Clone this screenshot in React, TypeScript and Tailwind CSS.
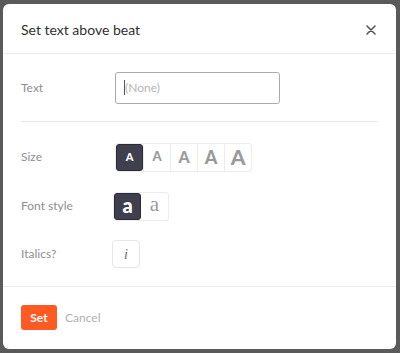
export default function App() {
  const sizes = ["text-[11px]", "text-[13px]", "text-[16px]", "text-[18px]", "text-[21px]"];
  return (
    <div className="w-[400px] h-[353px] bg-[#5a5a5a] pt-[4px] pl-[3px] font-['Lato','Liberation_Sans',sans-serif]">
      <div className="w-[393px] h-[345px] bg-white rounded-[6px] flex flex-col">
        <div className="h-[50px] flex items-center justify-between pl-[18px] pr-[20px] border-b border-[#ececf0]">
          <span className="text-[14px] text-[#2f2f33] mt-[2px]">Set text above beat</span>
          <svg width="10" height="10" viewBox="0 0 10 10" className="mt-[2px]">
            <path d="M1 1L9 9M9 1L1 9" stroke="#555" strokeWidth="1.6" strokeLinecap="round" />
          </svg>
        </div>
        <div className="px-[18px]">
          <div className="flex items-center h-[68px] border-b border-[#e8e8ee]">
            <span className="w-[94px] text-[12px] text-[#8e8e92]">Text</span>
            <div className="w-[165px] h-[32px] border border-[#a9a9ad] rounded-[3px] flex items-center pl-[8px]">
              <span className="w-px h-[15px] bg-[#555]" />
              <span className="text-[12px] text-[#b4b4b8]">(None)</span>
            </div>
          </div>
          <div className="flex items-center mt-[21px] h-[28px]">
            <span className="w-[94px] text-[12px] text-[#8e8e92]">Size</span>
            <div className="flex border border-[#ececef] rounded-[3px]">
              {sizes.map((s, i) => (
                <div
                  key={i}
                  className={
                    "w-[27px] h-[27px] flex items-center justify-center font-black " +
                    s +
                    (i === 0
                      ? " bg-[#3f3f4e] text-white rounded-[3px] border border-[#2b2b36]"
                      : " text-[#9a9a9e] border-l border-[#ececef]")
                  }
                >
                  A
                </div>
              ))}
            </div>
          </div>
          <div className="flex items-center mt-[21px] h-[28px]">
            <span className="w-[92px] text-[12px] text-[#8e8e92]">Font style</span>
            <div className="flex border border-[#ececef] rounded-[3px]">
              <div className="w-[27px] h-[27px] flex items-center justify-center bg-[#3f3f4e] text-white rounded-[3px] border border-[#2b2b36] text-[20px] font-black leading-none pb-[3px]">
                a
              </div>
              <div className="w-[27px] h-[27px] flex items-center justify-center text-[#9a9a9e] text-[21px] font-['Liberation_Serif',serif] leading-none pb-[4px]">
                a
              </div>
            </div>
          </div>
          <div className="flex items-center mt-[20px] h-[28px]">
            <span className="w-[91px] text-[12px] text-[#8e8e92]">Italics?</span>
            <div className="w-[28px] h-[28px] flex items-center justify-center border border-[#e6e6ea] rounded-[4px] text-[14px] italic text-[#6a6a6e] font-['Liberation_Serif',serif]">
              i
            </div>
          </div>
        </div>
        <div className="mt-[18px] border-t border-[#ececf0] flex items-center gap-[8px] pl-[18px] pt-[18px]">
          <button className="w-[36px] h-[25px] bg-[#ff5a24] rounded-[3px] text-white text-[12px] font-bold">Set</button>
          <span className="text-[12px] text-[#b0b0b4]">Cancel</span>
        </div>
      </div>
    </div>
  );
}
